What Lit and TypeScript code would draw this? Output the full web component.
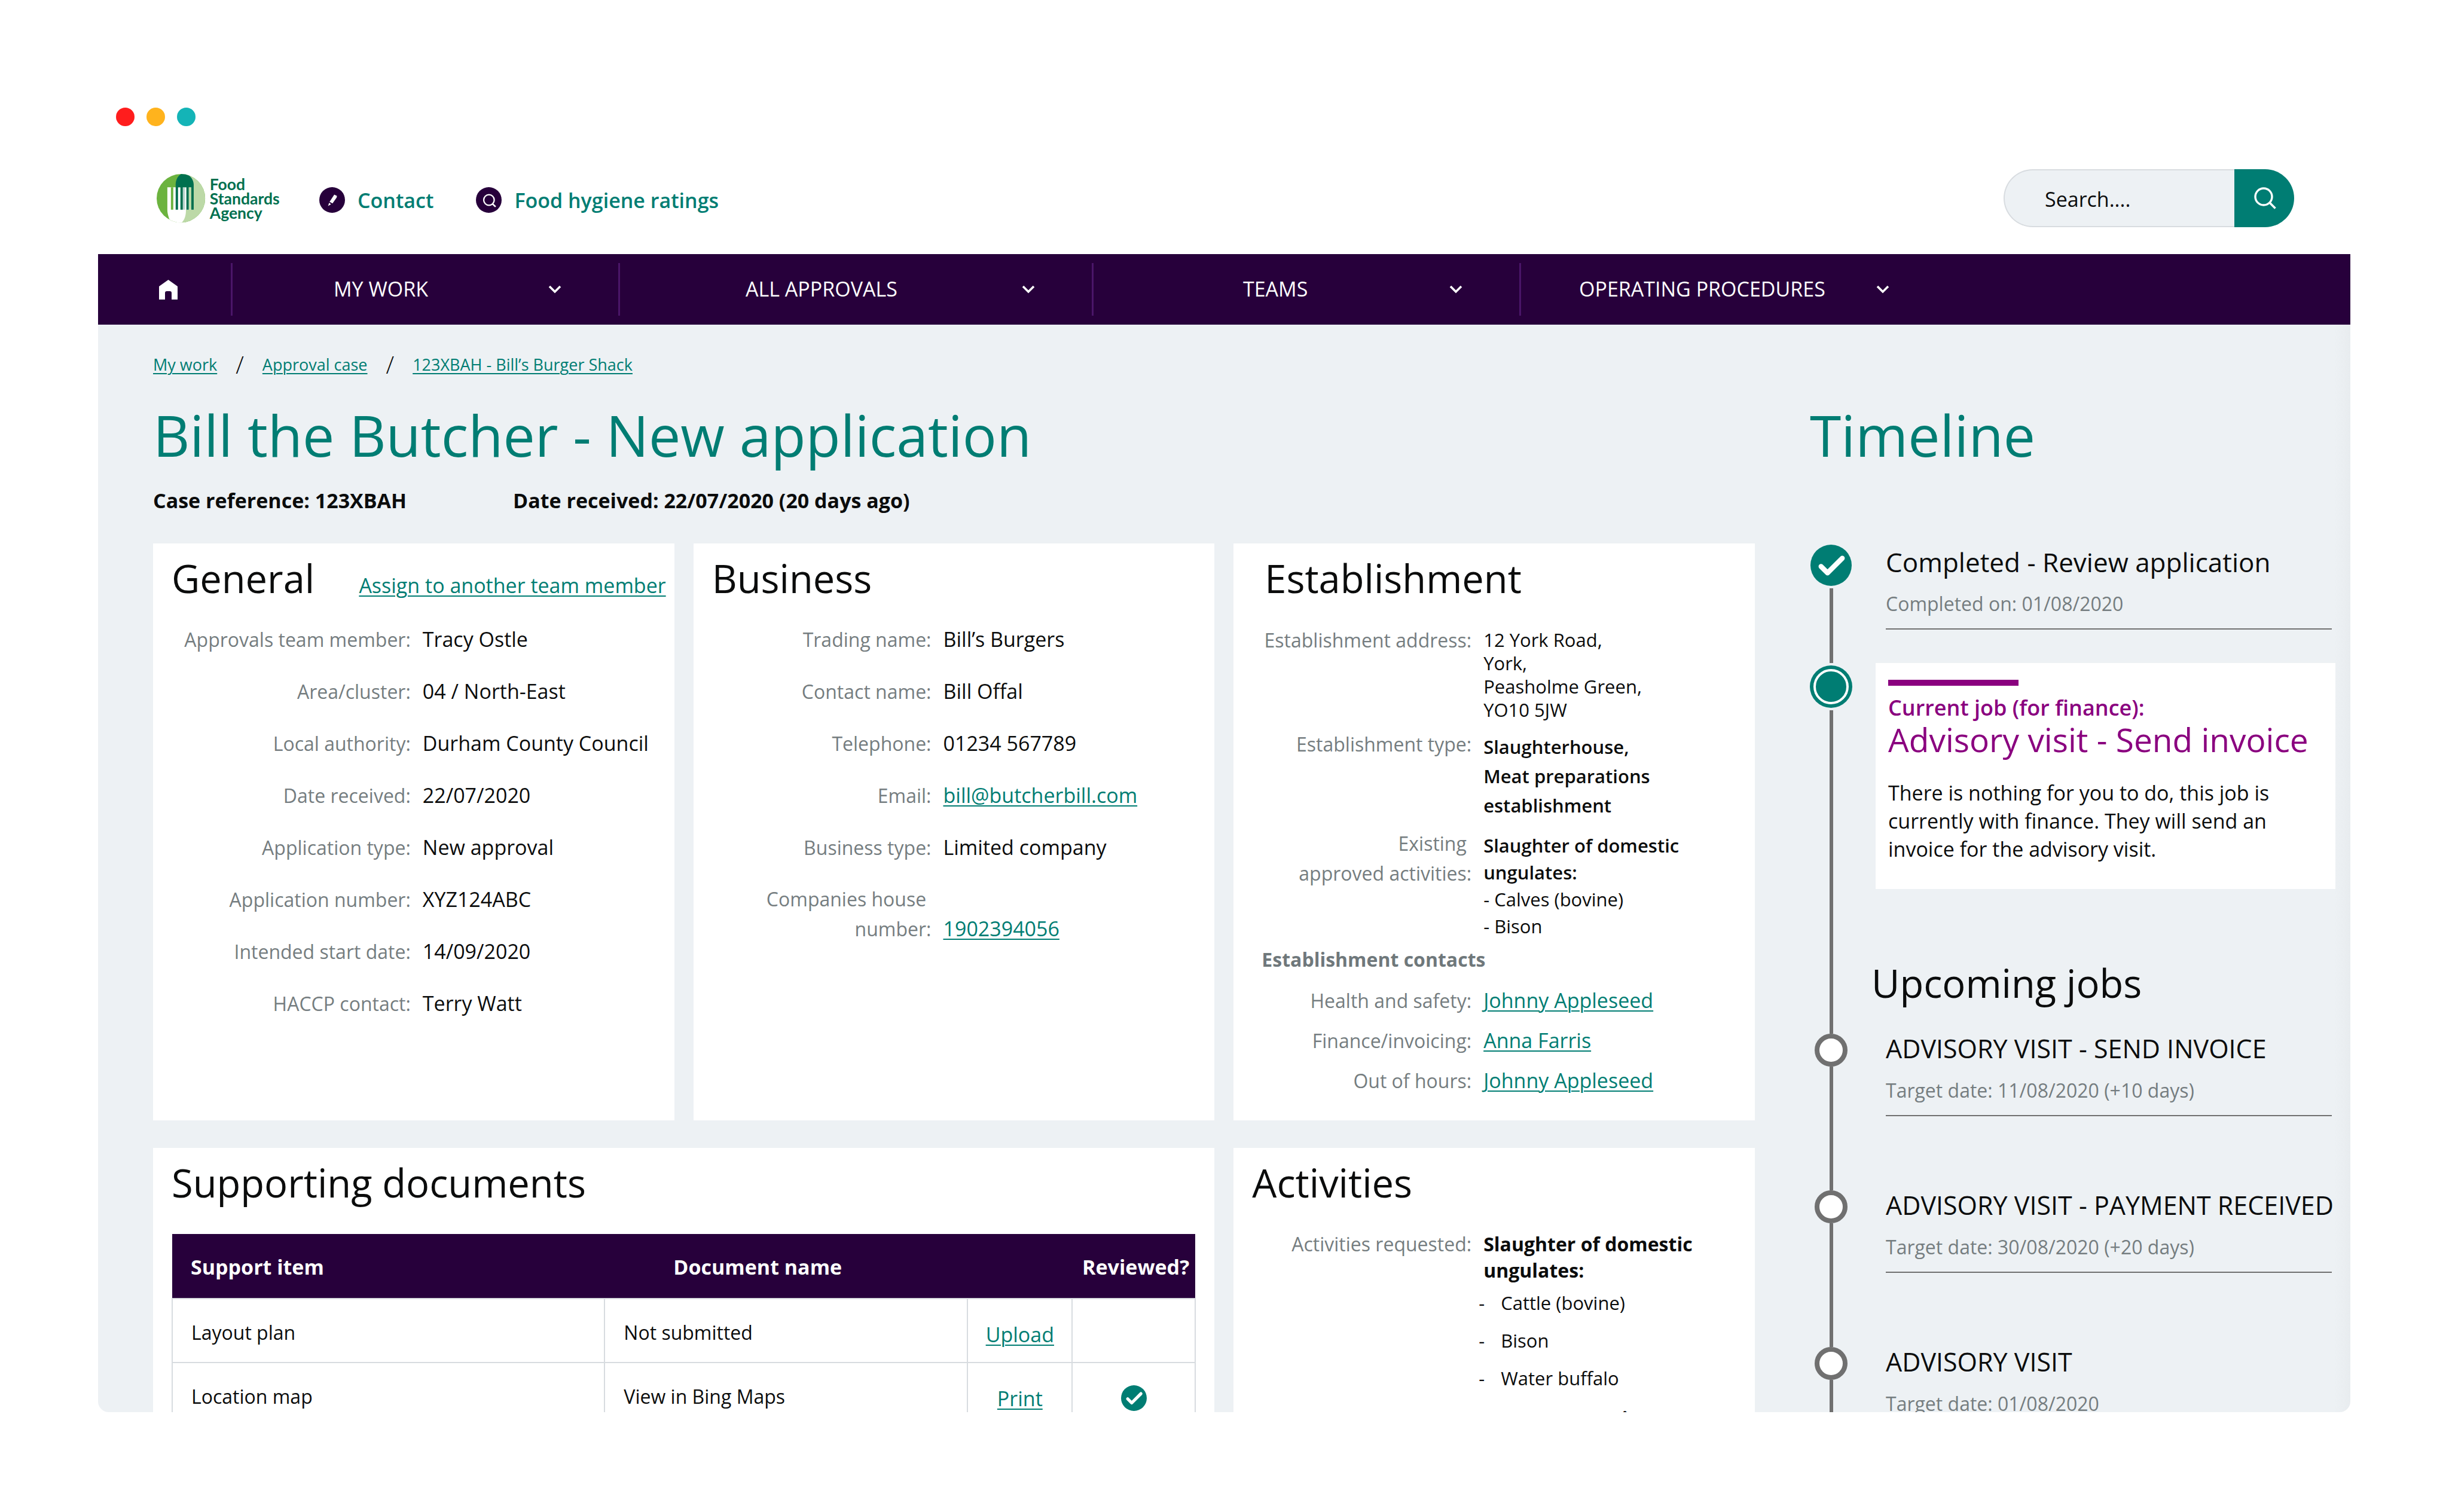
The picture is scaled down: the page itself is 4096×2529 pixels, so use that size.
import { LitElement, html, css, svg, nothing, type TemplateResult } from "lit";
import { customElement, property } from "lit/decorators.js";

const tokens = css`
  :host {
    --teal: #007d73;
    --ink: #0b0c0c;
    --muted: #757d80;
    --navy: #27003b;
    --plum: #8a007f;
    --surface: #edf1f4;
    --line: #d8dce0;
    --rail: #707070;
    display: block;
    box-sizing: border-box;
    font-family: "Open Sans", "Noto Sans", sans-serif;
    color: var(--ink);
  }
  *,
  *::before,
  *::after {
    box-sizing: border-box;
  }
  h1,
  h2,
  h3,
  p,
  dl,
  dd,
  ul,
  ol {
    margin: 0;
    padding: 0;
    font-weight: 400;
  }
  ul,
  ol {
    list-style: none;
  }
  a {
    color: var(--teal);
    text-decoration-thickness: 2px;
    text-underline-offset: 4px;
  }
  svg {
    display: block;
    flex: none;
  }
`;

const tick = (size: number) => svg`
  <svg width=${size} height=${size} viewBox="0 0 70 70" role="img" aria-label="Complete">
    <circle cx="35" cy="35" r="35" fill="#007d73" />
    <path d="M18 37 L29 48 L54 23" fill="none" stroke="#fff" stroke-width="8.5" stroke-linecap="round" stroke-linejoin="round" />
  </svg>`;

@customElement("site-header")
class SiteHeader extends LitElement {
  static styles = [
    tokens,
    css`
      .lights {
        display: flex;
        gap: 20px;
        padding-left: 30px;
      }
      .light {
        width: 31px;
        height: 31px;
        border-radius: 50%;
      }
      .red {
        background: #ff1d1d;
      }
      .amber {
        background: #ffb31d;
      }
      .aqua {
        background: #14b4b7;
      }
      .bar {
        display: flex;
        align-items: center;
        padding: 72px 94px 45px 98px;
      }
      .links {
        display: flex;
        gap: 71px;
        margin-left: 60px;
        padding-top: 6px;
      }
      .link {
        display: flex;
        align-items: center;
        gap: 21px;
        font-size: 34px;
        line-height: 46px;
        font-weight: 600;
        text-decoration: none;
      }
      .search {
        display: flex;
        width: 486px;
        height: 97px;
        margin-left: auto;
      }
      .field {
        flex: 1;
        min-width: 0;
        padding: 2px 0 0 67px;
        border: 2px solid var(--line);
        border-right: 0;
        border-radius: 49px 0 0 49px;
        background: var(--surface);
        font: 400 34px/46px "Open Sans", "Noto Sans", sans-serif;
        color: var(--ink);
      }
      .field::placeholder {
        color: var(--ink);
        opacity: 1;
      }
      .go {
        display: flex;
        align-items: center;
        width: 100px;
        padding: 0 0 0 33px;
        border: 0;
        border-radius: 0 49px 49px 0;
        background: var(--teal);
      }
      .wordmark {
        font-family: Lato, "Open Sans", sans-serif;
        font-weight: 700;
        font-size: 80px;
        fill: #00704f;
      }
    `,
  ];

  render() {
    return html`
      <div class="lights">
        <span class="light red"></span><span class="light amber"></span><span class="light aqua"></span>
      </div>
      <header class="bar">
        <svg width="212" height="82" viewBox="0 0 640 247" role="img" aria-label="Food Standards Agency">
          <defs>
            <clipPath id="disc"><circle cx="122.5" cy="122.5" r="122.5" /></clipPath>
          </defs>
          <g clip-path="url(#disc)">
            <rect width="246" height="246" fill="#6cb33f" />
            <path d="M130 0 H246 V246 H126 V60 Z" fill="#bcd9a7" />
            <path d="M54 67 H187 V180 H148 C148 210 142 232 122 250 H72 C64 225 54 205 54 180 Z" fill="#fff" />
            <path d="M72 67 H84 V180 H72 Z" fill="#6cb33f" />
            <path d="M132 67 H143 V180 H132 Z" fill="#b8d3cb" />
            <path d="M162 67 H187 V180 H162 Z" fill="#bcd9a7" />
            <path
              d="M96 180 V52 C97 24 112 0 136 -4 C164 0 186 24 187 52 V180 H175 V67 H162 V180 H150 V67 H132 V180 H120 V67 H108 V180 Z"
              fill="#00704f"
            />
          </g>
          <text class="wordmark" x="268" y="82">Food</text>
          <text class="wordmark" x="268" y="154">Standards</text>
          <text class="wordmark" x="268" y="225">Agency</text>
        </svg>
        <nav class="links" aria-label="Quick links">
          <a class="link" href="#contact">
            <svg width="43" height="43" viewBox="0 0 132 132" aria-hidden="true">
              <circle cx="66" cy="66" r="66" fill="#27003b" />
              <path d="M77 38 L91 45 L89 54 L68 84 L53 75 Z" fill="#fff" />
              <path d="M51 80 L45 97 L60 88 Z" fill="#fff" />
            </svg>
            Contact
          </a>
          <a class="link" href="#ratings">
            <svg width="43" height="43" viewBox="0 0 132 132" aria-hidden="true">
              <circle cx="66" cy="66" r="66" fill="#27003b" />
              <circle cx="67" cy="66" r="27" fill="none" stroke="#fff" stroke-width="7" />
              <path d="M85 86 L101 101" stroke="#fff" stroke-width="8" />
            </svg>
            Food hygiene ratings
          </a>
        </nav>
        <form class="search" role="search">
          <input class="field" type="search" placeholder="Search...." aria-label="Search" />
          <button class="go" type="button" aria-label="Run search">
            <svg width="37" height="37" viewBox="0 0 37 37" aria-hidden="true">
              <circle cx="16" cy="16" r="14" fill="none" stroke="#fff" stroke-width="3.4" />
              <path d="M26 26 L35.5 35.5" stroke="#fff" stroke-width="3.6" />
            </svg>
          </button>
        </form>
      </header>
    `;
  }
}

@customElement("main-nav")
class MainNav extends LitElement {
  static styles = [
    tokens,
    css`
      .bar {
        display: grid;
        grid-template-columns: 222fr 648fr 792fr 715fr 714fr 676fr;
        align-items: center;
        height: 118px;
        background: var(--navy);
      }
      .home {
        display: flex;
        padding-left: 102px;
      }
      .menu {
        display: flex;
        align-items: center;
        justify-content: space-between;
        height: 88px;
        padding: 0 95px 0 0;
        border: 0;
        border-left: 3px solid #4a1568;
        background: none;
        color: #fff;
        font: 400 34px/46px "Open Sans", "Noto Sans", sans-serif;
      }
      .label {
        padding-bottom: 2px;
      }
      .work {
        padding-left: 169px;
      }
      .approvals {
        padding-left: 210px;
      }
      .teams {
        padding-left: 250px;
      }
      .procedures {
        padding-left: 97px;
      }
    `,
  ];

  private items = [
    ["work", "MY WORK"],
    ["approvals", "ALL APPROVALS"],
    ["teams", "TEAMS"],
    ["procedures", "OPERATING PROCEDURES"],
  ];

  render() {
    return html`
      <nav class="bar" aria-label="Main">
        <a class="home" href="#home" aria-label="Home">
          <svg width="31" height="33" viewBox="0 0 31 33" aria-hidden="true">
            <path d="M15.5 0 L31 11 V33 H21 V22 Q21 19 18 19 H13 Q10 19 10 22 V33 H0 V11 Z" fill="#fff" />
          </svg>
        </a>
        ${this.items.map(
          ([id, label]) => html`
            <button class="menu ${id}" type="button" aria-haspopup="true">
              <span class="label">${label}</span>
              <svg width="22" height="14" viewBox="0 0 22 14" aria-hidden="true">
                <path d="M2 2 L11 11 L20 2" fill="none" stroke="#fff" stroke-width="3.6" />
              </svg>
            </button>
          `,
        )}
      </nav>
    `;
  }
}

@customElement("case-card")
class CaseCard extends LitElement {
  @property() heading = "";

  static styles = [
    tokens,
    css`
      :host {
        padding: 14px 14px 33px 31px;
        background: #fff;
      }
      .head {
        display: flex;
        align-items: baseline;
        justify-content: space-between;
      }
      .title {
        font-size: 65px;
        line-height: 88px;
      }
      :host(.inset) .title {
        padding-left: 21px;
      }
    `,
  ];

  render() {
    return html`
      <div class="head">
        <h2 class="title">${this.heading}</h2>
        <slot name="action"></slot>
      </div>
      <slot></slot>
    `;
  }
}

type Field = [string | TemplateResult, string | TemplateResult];

@customElement("case-summary")
class CaseSummary extends LitElement {
  static styles = [
    tokens,
    css`
      .crumbs {
        display: flex;
        gap: 31px;
        font-size: 27px;
        line-height: 38px;
      }
      .slash {
        font-size: 40px;
        font-weight: 300;
      }
      .title {
        margin-top: 38px;
        font-size: 95px;
        line-height: 120px;
        color: var(--teal);
      }
      .refs {
        display: flex;
        gap: 178px;
        margin-top: 27px;
        font-size: 34px;
        line-height: 46px;
      }
      .ref {
        font-weight: 700;
      }
      .cards {
        display: grid;
        grid-template-columns: repeat(3, minmax(0, 1fr));
        gap: 46px 32px;
        margin-top: 49px;
      }
      .wide {
        grid-column: span 2;
        padding-right: 31px;
      }
      .action {
        font-size: 34px;
        line-height: 46px;
      }
      .fields {
        margin-top: 15px;
      }
      .row {
        display: grid;
        grid-template-columns: minmax(0, 367fr) minmax(0, 440fr);
        column-gap: 20px;
        align-items: last baseline;
        padding: 18px 0;
        font-size: 34px;
        line-height: 50px;
      }
      .general .row {
        grid-template-columns: minmax(0, 400fr) minmax(0, 407fr);
      }
      .key {
        text-align: right;
        font-size: 32px;
        color: var(--muted);
      }
      .value {
        white-space: nowrap;
      }
      .row.top {
        align-items: start;
        padding: 0;
      }
      .top .value {
        font-size: 31px;
      }
      .row.address {
        margin-top: 40px;
        line-height: 39px;
      }
      .row.kind {
        margin-top: 13px;
      }
      .kind .value {
        padding-top: 5px;
        line-height: 49px;
        font-weight: 600;
      }
      .row.existing {
        margin-top: 14px;
      }
      .existing .value {
        padding-top: 6px;
        line-height: 45px;
      }
      .strong {
        font-weight: 600;
      }
      .subhead {
        margin: 8px 0 10px;
        padding-left: 16px;
        font-size: 32px;
        line-height: 50px;
        font-weight: 700;
        color: #6f787b;
      }
      .row.contact {
        padding: 8px 0;
      }
      .row.requested {
        margin-top: 37px;
        line-height: 44px;
      }
      .group {
        font-size: 32px;
        font-weight: 700;
      }
      .species {
        margin: 1px 0 14px -8px;
      }
      .item {
        display: grid;
        grid-template-columns: 37px 1fr;
        line-height: 63px;
      }
      .docs {
        width: 100%;
        margin-top: 42px;
        border-collapse: collapse;
        table-layout: fixed;
        font-size: 32px;
        line-height: 42px;
      }
      .docs th {
        height: 108px;
        padding: 2px 0 0 31px;
        background: var(--navy);
        color: #fff;
        font-size: 34px;
        font-weight: 700;
        text-align: left;
      }
      .docs .name-head {
        padding-left: 115px;
      }
      .docs .review-head {
        padding: 2px 10px 0 0;
        text-align: right;
        white-space: nowrap;
      }
      .docs td {
        height: 107px;
        padding: 6px 0 0 31px;
        border: 2px solid var(--line);
      }
      .docs .mid {
        padding: 12px 0 0;
        font-size: 34px;
        text-align: center;
      }
      .mid svg {
        margin: 0 auto;
      }
      .c2 {
        width: 607px;
      }
      .c3 {
        width: 175px;
      }
      .c4 {
        width: 206px;
      }
    `,
  ];

  private general: Field[] = [
    ["Approvals team member:", "Tracy Ostle"],
    ["Area/cluster:", "04 / North-East"],
    ["Local authority:", "Durham County Council"],
    ["Date received:", "22/07/2020"],
    ["Application type:", "New approval"],
    ["Application number:", "XYZ124ABC"],
    ["Intended start date:", "14/09/2020"],
    ["HACCP contact:", "Terry Watt"],
  ];

  private business: Field[] = [
    ["Trading name:", "Bill’s Burgers"],
    ["Contact name:", "Bill Offal"],
    ["Telephone:", "01234 567789"],
    ["Email:", html`<a href="#email">bill@butcherbill.com</a>`],
    ["Business type:", "Limited company"],
    [html`Companies house&nbsp;<br />number:`, html`<a href="#company">1902394056</a>`],
  ];

  private contacts: Field[] = [
    ["Health and safety:", html`<a href="#hs">Johnny Appleseed</a>`],
    ["Finance/invoicing:", html`<a href="#finance">Anna Farris</a>`],
    ["Out of hours:", html`<a href="#hours">Johnny Appleseed</a>`],
  ];

  private documents = [
    { item: "Layout plan", name: "Not submitted", action: "Upload", reviewed: false },
    { item: "Location map", name: "View in Bing Maps", action: "Print", reviewed: true },
  ];

  private row([key, value]: Field, extra = "") {
    return html`<div class="row ${extra}">
      <dt class="key">${key}</dt>
      <dd class="value">${value}</dd>
    </div>`;
  }

  render() {
    return html`
      <nav class="crumbs" aria-label="Breadcrumb">
        <a href="#work">My work</a><span class="slash">/</span><a href="#case">Approval case</a
        ><span class="slash">/</span><a href="#shack">123XBAH - Bill’s Burger Shack</a>
      </nav>
      <h1 class="title">Bill the Butcher - New application</h1>
      <div class="refs">
        <p class="ref">Case reference: 123XBAH</p>
        <p class="ref">Date received: 22/07/2020 (20 days ago)</p>
      </div>
      <div class="cards">
        <case-card heading="General">
          <a slot="action" class="action" href="#assign">Assign to another team member</a>
          <dl class="fields general">${this.general.map((f) => this.row(f))}</dl>
        </case-card>
        <case-card heading="Business">
          <dl class="fields">${this.business.map((f) => this.row(f))}</dl>
        </case-card>
        <case-card class="inset" heading="Establishment">
          <dl>
            ${this.row(
              ["Establishment address:", html`12 York Road,<br />York,<br />Peasholme Green,<br />YO10 5JW`],
              "top address",
            )}
            ${this.row(
              ["Establishment type:", html`Slaughterhouse,<br />Meat preparations<br />establishment`],
              "top kind",
            )}
            ${this.row(
              [
                html`Existing&nbsp;<br />approved activities:`,
                html`<span class="strong">Slaughter of domestic<br />ungulates:</span><br />- Calves (bovine)<br />-
                  Bison`,
              ],
              "top existing",
            )}
          </dl>
          <h3 class="subhead">Establishment contacts</h3>
          <dl>${this.contacts.map((f) => this.row(f, "contact"))}</dl>
        </case-card>
        <case-card class="wide" heading="Supporting documents">
          <table class="docs">
            <colgroup>
              <col class="c1" />
              <col class="c2" />
              <col class="c3" />
              <col class="c4" />
            </colgroup>
            <thead>
              <tr>
                <th scope="col">Support item</th>
                <th scope="col" class="name-head">Document name</th>
                <th scope="col" colspan="2" class="review-head">Reviewed?</th>
              </tr>
            </thead>
            <tbody>
              ${this.documents.map(
                (d) => html`<tr>
                  <td>${d.item}</td>
                  <td>${d.name}</td>
                  <td class="mid"><a href="#document">${d.action}</a></td>
                  <td class="mid">${d.reviewed ? tick(43) : nothing}</td>
                </tr>`,
              )}
            </tbody>
          </table>
        </case-card>
        <case-card heading="Activities">
          <dl>
            ${this.row(
              [
                "Activities requested:",
                html`<p class="group">Slaughter of domestic<br />ungulates:</p>
                  <ul class="species">
                    ${["Cattle (bovine)", "Bison", "Water buffalo"].map(
                      (s) => html`<li class="item"><span>-</span>${s}</li>`,
                    )}
                  </ul>
                  <p class="group">Meat preparations</p>`,
              ],
              "top requested",
            )}
          </dl>
        </case-card>
      </div>
    `;
  }
}

@customElement("case-timeline")
class CaseTimeline extends LitElement {
  static styles = [
    tokens,
    css`
      .title {
        font-size: 95px;
        line-height: 120px;
        color: var(--teal);
      }
      .steps {
        margin-top: 124px;
      }
      .step {
        display: grid;
        grid-template-columns: 71px minmax(0, 1fr);
        column-gap: 32px;
      }
      .rail {
        display: flex;
        flex-direction: column;
        align-items: center;
        gap: 4px;
      }
      .rail::after {
        content: "";
        flex: 1;
        width: 6px;
        background: var(--rail);
      }
      .done {
        min-height: 198px;
      }
      .current .rail {
        padding-top: 4px;
      }
      .next {
        min-height: 262px;
      }
      .next .rail {
        gap: 0;
      }
      .next .rail::before {
        content: "";
        width: 6px;
        height: 4px;
        background: var(--rail);
      }
      .dot {
        width: 55px;
        height: 55px;
        border: 8px solid var(--rail);
        border-radius: 50%;
        background: #fff;
      }
      .body {
        align-self: start;
        margin: 0 6px 0 24px;
        padding-bottom: 18px;
        border-bottom: 2px solid var(--rail);
      }
      .name {
        font-size: 44px;
        line-height: 58px;
        white-space: nowrap;
      }
      .next .name {
        font-size: 43px;
      }
      .date {
        margin-top: 18px;
        font-size: 32px;
        line-height: 46px;
        color: var(--muted);
      }
      .card {
        margin: 0 0 113px 7px;
        padding: 28px 20px 43px 21px;
        background: #fff;
      }
      .accent {
        width: 218px;
        height: 10px;
        background: var(--plum);
      }
      .tag {
        margin-top: 14px;
        font-size: 36px;
        line-height: 46px;
        font-weight: 600;
        color: var(--plum);
      }
      .job {
        font-size: 55px;
        line-height: 60px;
        color: var(--plum);
        white-space: nowrap;
      }
      .note {
        margin-top: 36px;
        font-size: 34px;
        line-height: 47px;
      }
      .upcoming {
        margin-bottom: 37px;
        font-size: 65px;
        line-height: 88px;
      }
    `,
  ];

  private upcoming = [
    ["ADVISORY VISIT - SEND INVOICE", "Target date: 11/08/2020 (+10 days)"],
    ["ADVISORY VISIT - PAYMENT RECEIVED", "Target date: 30/08/2020 (+20 days)"],
    ["ADVISORY VISIT", "Target date: 01/08/2020"],
  ];

  render() {
    return html`
      <h2 class="title">Timeline</h2>
      <ol class="steps">
        <li class="step done">
          <div class="rail">${tick(69)}</div>
          <div class="body">
            <h3 class="name">Completed - Review application</h3>
            <p class="date">Completed on: 01/08/2020</p>
          </div>
        </li>
        <li class="step current">
          <div class="rail">
            <svg width="71" height="71" viewBox="0 0 71 71" role="img" aria-label="In progress">
              <circle cx="35.5" cy="35.5" r="35.5" fill="#007d73" />
              <circle cx="35.5" cy="35.5" r="27.5" fill="none" stroke="#fff" stroke-width="4" />
            </svg>
          </div>
          <div>
            <div class="card">
              <div class="accent"></div>
              <p class="tag">Current job (for finance):</p>
              <h3 class="job">Advisory visit - Send invoice</h3>
              <p class="note">
                There is nothing for you to do, this job is currently with finance. They will send an invoice for the
                advisory visit.
              </p>
            </div>
            <h2 class="upcoming">Upcoming jobs</h2>
          </div>
        </li>
        ${this.upcoming.map(
          ([name, date]) => html`<li class="step next">
            <div class="rail"><span class="dot"></span></div>
            <div class="body">
              <h3 class="name">${name}</h3>
              <p class="date">${date}</p>
            </div>
          </li>`,
        )}
      </ol>
    `;
  }
}

@customElement("app-root")
class AppRoot extends LitElement {
  static styles = [
    tokens,
    css`
      :host {
        display: flex;
        flex-direction: column;
        height: 100vh;
        padding: 180px 165px 167px 164px;
        background: #fff;
      }
      .content {
        flex: 1;
        min-height: 0;
        display: grid;
        grid-template-columns: minmax(0, 2679fr) minmax(0, 879fr);
        column-gap: 92px;
        padding: 48px 25px 0 92px;
        overflow: hidden;
        border-radius: 0 0 18px 18px;
        background: linear-gradient(to left, #e8ecef, var(--surface) 26px);
      }
      .aside {
        padding-top: 76px;
      }
    `,
  ];

  render() {
    return html`
      <site-header></site-header>
      <main-nav></main-nav>
      <main class="content">
        <case-summary></case-summary>
        <case-timeline class="aside"></case-timeline>
      </main>
    `;
  }
}
